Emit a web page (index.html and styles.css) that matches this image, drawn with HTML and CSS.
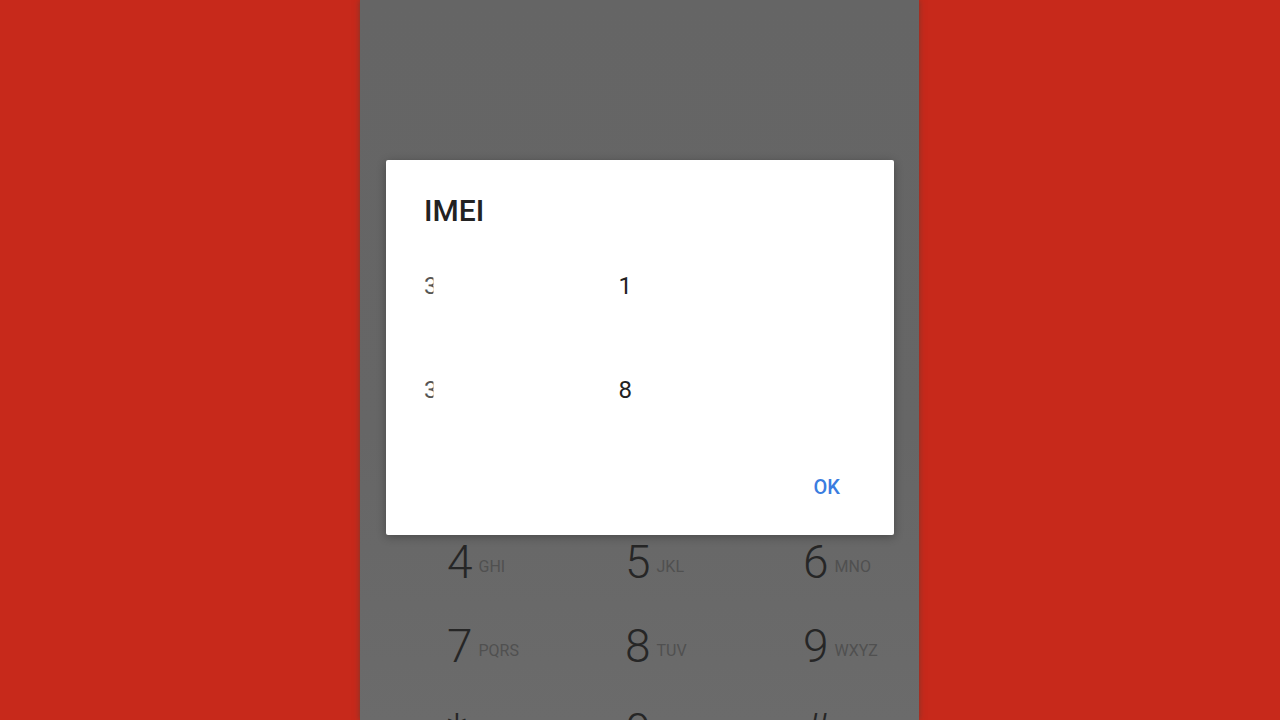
FILE: index.html
```html
<!DOCTYPE html>
<html>
<head>
<meta charset="utf-8">
<link rel="stylesheet" href="styles.css">
</head>
<body>
<div class="stage">
  <div class="phone">
    <div class="display"></div>
    <div class="keypad">
      <div class="key"><span class="d">1</span><span class="l"></span></div>
      <div class="key"><span class="d">2</span><span class="l">ABC</span></div>
      <div class="key"><span class="d">3</span><span class="l">DEF</span></div>
      <div class="key"><span class="d">4</span><span class="l">GHI</span></div>
      <div class="key"><span class="d">5</span><span class="l">JKL</span></div>
      <div class="key"><span class="d">6</span><span class="l">MNO</span></div>
      <div class="key"><span class="d">7</span><span class="l">PQRS</span></div>
      <div class="key"><span class="d">8</span><span class="l">TUV</span></div>
      <div class="key"><span class="d">9</span><span class="l">WXYZ</span></div>
      <div class="key"><span class="d">*</span></div>
      <div class="key"><span class="d">0</span><span class="l">+</span></div>
      <div class="key"><span class="d">#</span></div>
    </div>
    <div class="dialog">
      <div class="title">IMEI</div>
      <div class="imei first"><span class="faint">3</span><span class="mask"></span>1</div>
      <div class="imei"><span class="faint">3</span><span class="mask mask2"></span>8</div>
      <div class="actions"><span class="ok">OK</span></div>
    </div>
  </div>
</div>
</body>
</html>
```
FILE: styles.css
```css
html, body {
  margin: 0;
  padding: 0;
}
body {
  width: 1280px;
  height: 720px;
  overflow: hidden;
  background: #c7291b;
  font-family: Roboto, "Liberation Sans", sans-serif;
}
.stage {
  height: 720px;
  display: flex;
}
.phone {
  position: relative;
  margin-left: 360px;
  width: 559px;
  height: 720px;
  background: linear-gradient(#656565, #666666 60%, #6b6b6b);
  display: flex;
  flex-direction: column;
  overflow: hidden;
  box-shadow: 0 0 6px rgba(40, 70, 60, 0.5);
}
.display {
  flex: 0 0 436px;
}
.keypad {
  flex: 1;
  display: grid;
  grid-template-columns: 178px 178px 178px;
  grid-auto-rows: 84px;
  padding-left: 87px;
}
.key {
  display: flex;
  align-items: baseline;
  height: 84px;
  line-height: 84px;
}
.d {
  font-size: 46px;
  font-weight: 300;
  color: #262626;
}
.l {
  margin-left: 6px;
  font-size: 16px;
  color: #505050;
  position: relative;
  top: -6px;
}
.dialog {
  position: absolute;
  left: 26px;
  top: 160px;
  width: 508px;
  height: 375px;
  box-sizing: border-box;
  background: #ffffff;
  border-radius: 2px;
  box-shadow: 0 2px 10px rgba(0, 0, 0, 0.3);
  padding: 33px 54px 0 38px;
}
.title {
  font-size: 30px;
  line-height: 36px;
  font-weight: 500;
  color: #222222;
}
.imei {
  font-size: 24px;
  line-height: 28px;
  color: #222222;
  display: flex;
  align-items: baseline;
}
.imei.first {
  margin-top: 43px;
  margin-bottom: 76px;
}
.faint {
  color: #555555;
  clip-path: inset(0 30% 0 0);
}
.mask {
  display: inline-block;
  width: 181px;
  height: 1px;
}
.mask2 {
  width: 181px;
}
.actions {
  display: flex;
  justify-content: flex-end;
  margin-top: 71px;
}
.ok {
  font-size: 20px;
  line-height: 24px;
  font-weight: 500;
  color: #3b7ddf;
}
```
